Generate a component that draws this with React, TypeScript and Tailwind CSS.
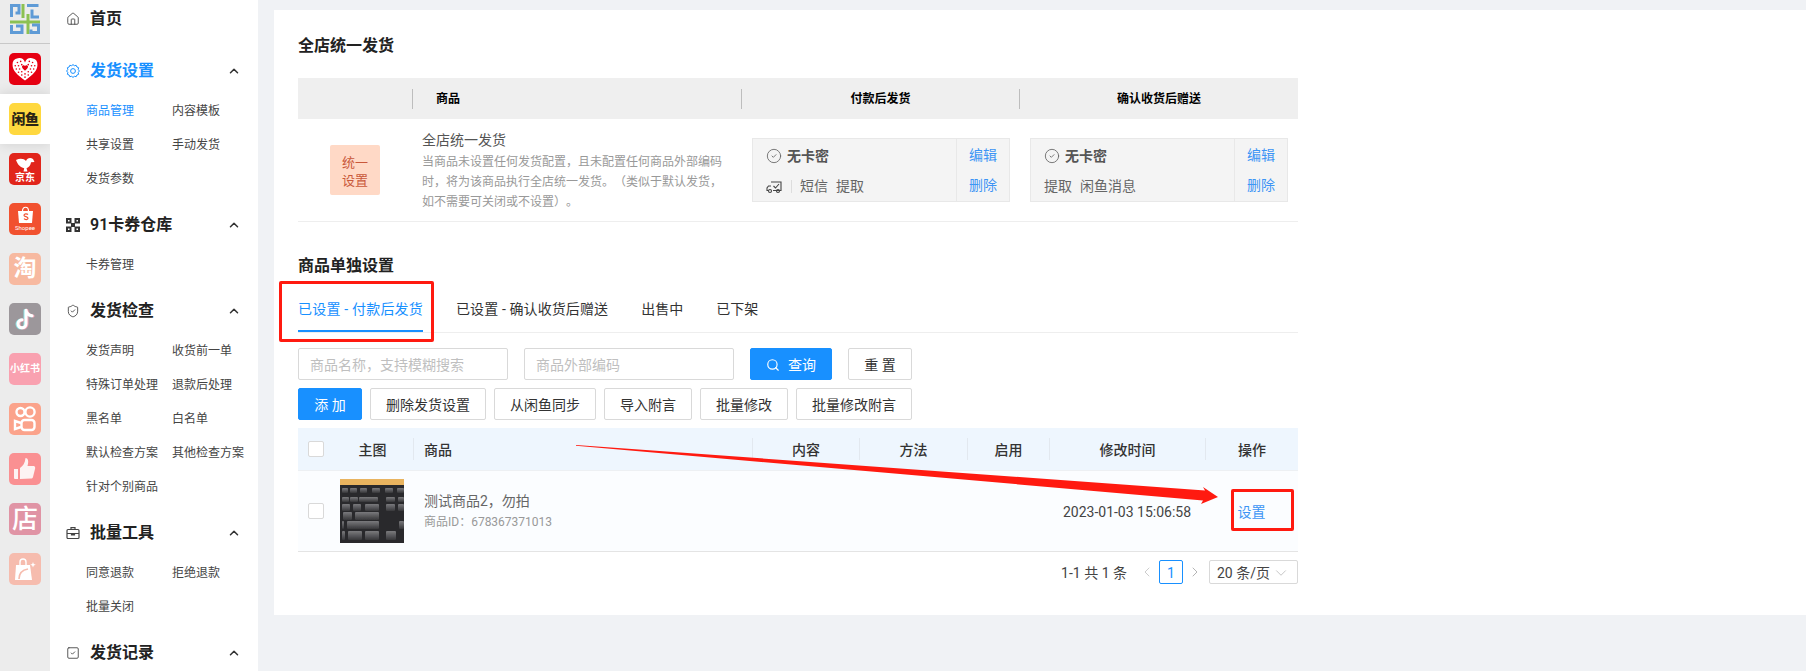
import React from "react";
import { ChevronUp, ChevronLeft, ChevronRight, ChevronDown, Home, Search, ShieldCheck, SquareCheck, CircleCheck } from "lucide-react";

const navGroups = [
  { title: "发货设置", icon: "gear", active: true, items: ["商品管理", "内容模板", "共享设置", "手动发货", "发货参数"] },
  { title: "91卡券仓库", icon: "qr", items: ["卡券管理"] },
  {
    title: "发货检查",
    icon: "shield",
    items: ["发货声明", "收货前一单", "特殊订单处理", "退款后处理", "黑名单", "白名单", "默认检查方案", "其他检查方案", "针对个别商品"],
  },
  { title: "批量工具", icon: "case", items: ["同意退款", "拒绝退款", "批量关闭"] },
  { title: "发货记录", icon: "record", items: [] },
];

const keys = [
  [2, 9, 6, 5], [10, 9, 7, 5], [20, 9, 7, 5], [32, 9, 8, 5], [45, 9, 8, 5], [57, 9, 7, 5],
  [2, 18, 7, 5], [10, 18, 8, 5], [19, 18, 19, 5], [46, 18, 9, 5], [58, 18, 6, 5],
  [2, 25, 8, 7], [13, 25, 8, 7], [25, 25, 14, 7], [46, 25, 9, 7], [58, 25, 6, 7],
  [3, 33, 9, 8], [15, 33, 24, 8],
  [2, 42, 2, 8], [7, 42, 32, 8], [59, 42, 5, 8],
  [2, 52, 3, 9], [8, 52, 14, 9], [25, 52, 14, 9], [46, 52, 10, 9],
];

// red dots of the lace pattern on the heart tile
const heartDots = [
  [5, 5], [8, 4], [16, 4], [19, 5], [3, 8], [6, 8], [9, 7], [15, 7], [18, 8], [21, 8],
  [4, 11], [7, 11], [17, 11], [20, 11], [6, 14], [9, 13.500], [15, 13.500], [18, 14], [9, 16.500], [12, 15.500], [15, 16.500], [12, 18.500],
];

function NavIcon({ name }: { name: string }) {
  if (name === "gear") {
    return (
      <svg width="14" height="14" viewBox="0 0 14 14" fill="none" stroke="#1890ff" strokeWidth="1">
        <path d="M7 .6l1.400 1.100 1.800-.4.700 1.700 1.700.7-.4 1.800L13.400 7l-1.200 1.500.4 1.800-1.700.7-.7 1.700-1.800-.4L7 13.400l-1.400-1.100-1.800.4-.7-1.700-1.700-.7.4-1.800L.6 7l1.200-1.500-.4-1.800 1.700-.7.7-1.700 1.800.4z" />
        <circle cx="7" cy="7" r="2.400" />
      </svg>
    );
  }
  if (name === "qr") {
    return (
      <svg width="14" height="14" viewBox="0 0 14 14" fill="#333">
        <path d="M0 0h5.500v5.500H0zM8.500 0H14v5.500H8.500zM0 8.500h5.500V14H0zM8.500 8.500H14V14H8.500zM5 5h4v4H5z" />
        <path d="M2 2h1.500v1.500H2zM10.500 2H12v1.500h-1.500zM2 10.500h1.500V12H2zM10.500 10.500H12V12h-1.500z" fill="#fff" />
      </svg>
    );
  }
  if (name === "shield") return <ShieldCheck size={14} strokeWidth={1.5} color="#444" />;
  if (name === "case") {
    return (
      <svg width="14" height="14" viewBox="0 0 14 14" fill="none" stroke="#444" strokeWidth="1.200">
        <rect x="1" y="3.500" width="12" height="9" rx="1" />
        <path d="M5 3.500V1.600h4v1.900M1 7.500h12" />
        <path d="M5.500 7.500h3V9h-3z" fill="#444" />
      </svg>
    );
  }
  if (name === "record") return <SquareCheck size={14} strokeWidth={1.5} color="#444" />;
  return <Home size={14} strokeWidth={1.5} color="#444" />;
}

function NavGroup({ group }: { group: (typeof navGroups)[number] }) {
  return (
    <div className="mb-[11px]">
      <div className="flex h-9 items-center pl-4 pr-[16px]">
        <span className="flex w-6 items-center"><NavIcon name={group.icon} /></span>
        <span className={`text-base font-semibold ${group.active ? "text-[#1890ff]" : "text-[#222]"}`}>{group.title}</span>
        <ChevronUp size={14} strokeWidth={2.6} color="#333" className="ml-auto mr-[1px]" />
      </div>
      {group.items.length > 0 && (
        <div className="mt-[5px] grid grid-cols-[86px_86px] pl-9 text-xs leading-[34px] text-[#444]">
          {group.items.map((item) => (
            <a key={item} className={`whitespace-nowrap ${item === "商品管理" ? "text-[#1890ff]" : ""}`}>{item}</a>
          ))}
        </div>
      )}
    </div>
  );
}

function Tile({ bg, children, active }: { bg: string; children: React.ReactNode; active?: boolean }) {
  return (
    <div className={`flex h-[50px] items-center justify-center ${active ? "bg-white shadow-[0_0_12px_rgba(0,0,0,0.12)]" : ""}`}>
      <div className={`flex h-8 w-8 flex-col items-center justify-center overflow-hidden rounded-[5px] text-white ${bg}`}>{children}</div>
    </div>
  );
}

function Rail() {
  return (
    <div className="flex w-[50px] shrink-0 flex-col bg-[#ececec]">
      <div className="flex h-[44px] items-start justify-center border-b border-[#c8c8c8] pt-1">
        <svg width="30" height="30" viewBox="0 0 30 30" fill="none" strokeWidth="3">
          <path d="M13 0v14" stroke="#8cc152" />
          <path d="M0 18h30M18 10v20" stroke="#8cc152" />
          <path d="M1.500 13V1.500H9V9H5.500M29 13H22V5.500M17 1.500h11.500M1.500 21v7.500H12V22H6M22 21h6.500v7.500H21v-3" stroke="#5f9bd6" />
        </svg>
      </div>
      <div className="flex flex-col">
        <Tile bg="bg-[#e60012]">
          <svg width="26" height="24" viewBox="0 0 24 22">
            <path d="M12 21.500C5 16.500.5 12.500.5 7a5.900 5.900 0 0 1 11.500-2 5.900 5.900 0 0 1 11.500 2c0 5.500-4.500 9.500-11.500 14.500z" fill="#fff" />
            <g fill="#e60012">
              {heartDots.map(([x, y]) => <circle key={`${x}-${y}`} cx={x} cy={y} r="0.750" />)}
              <path d="M12 12.500c-1.800-1.200-2.800-2.300-2.800-3.700a1.500 1.500 0 0 1 2.800-.6 1.500 1.500 0 0 1 2.800.6c0 1.400-1 2.500-2.800 3.700z" />
            </g>
          </svg>
        </Tile>
        <Tile bg="bg-[#ffd83f]" active>
          <span className="whitespace-nowrap text-[14px] font-black leading-none tracking-[-0.5px] text-[#2a2416]">闲鱼</span>
        </Tile>
        <Tile bg="bg-[#e1251b]">
          <svg width="20" height="16" viewBox="0 0 20 16" fill="#fff">
            <path d="M1 4c4-2 8-1.500 10 1 1-3 4.500-4 7-2l1.500 3-3.500.2c-.3 3-2 5-4.500 6l1 3.300H8.500l.7-3.300C5.500 11.500 2.500 8.500 1 4z" />
          </svg>
          <span className="text-[10px] font-bold leading-[11px]">京东</span>
        </Tile>
        <Tile bg="bg-[#f1512f]">
          <svg width="17" height="18" viewBox="0 0 17 18">
            <path d="M1 5h15l-1 12H2z" fill="#fff" />
            <path d="M5.500 5c0-5 6-5 6 0" fill="none" stroke="#fff" strokeWidth="1.200" />
            <path d="M11 8.500c-1-1-4-1-4 .8 0 1.800 4 1 4 3 0 1.600-3 1.600-4 .4" fill="none" stroke="#f1512f" strokeWidth="1.200" />
          </svg>
          <span className="text-[6px] leading-[8px]">Shopee</span>
        </Tile>
        <Tile bg="bg-[#f7b9a0]"><span className="text-[23px] font-bold leading-[28px]">淘</span></Tile>
        <Tile bg="bg-[#9c979b]">
          <svg width="22" height="24" viewBox="0 0 22 24" fill="none" strokeLinecap="round">
            <path d="M12 3v13.500a4 4 0 1 1-4-4M12 3c.4 3 2.600 5 6 5.400" stroke="#8fe4e6" strokeWidth="3" transform="translate(-1 .6)" />
            <path d="M12 3v13.500a4 4 0 1 1-4-4M12 3c.4 3 2.600 5 6 5.400" stroke="#f3a3b4" strokeWidth="3" transform="translate(1 .6)" />
            <path d="M12 3v13.500a4 4 0 1 1-4-4M12 3c.4 3 2.600 5 6 5.400" stroke="#fff" strokeWidth="3" transform="translate(0 .3)" />
          </svg>
        </Tile>
        <Tile bg="bg-[#f9a1b0]"><span className="whitespace-nowrap text-[10px] font-bold leading-[14px]">小红书</span></Tile>
        <Tile bg="bg-[#fba38b]">
          <svg width="24" height="26" viewBox="0 0 24 26" fill="none" stroke="#fff" strokeWidth="2.400">
            <circle cx="7.500" cy="6" r="4" />
            <circle cx="17" cy="6" r="4.600" />
            <rect x="8.500" y="14" width="13" height="10" rx="3" />
            <path d="M8 17l-6-2v8l6-2" />
          </svg>
        </Tile>
        <Tile bg="bg-[#fa9092]">
          <svg width="24" height="24" viewBox="0 0 24 24" fill="#fdf3f3">
            <path d="M1 12h4v10H2a1 1 0 0 1-1-1z" />
            <path d="M7 11c3-2 5-5 5.500-10 2.500 0 3.500 3 2 8h6c1.500 0 2 1.500 1.500 3l-2 8c-.3 1-1 1.500-2 1.500L7 22z" />
          </svg>
        </Tile>
        <Tile bg="bg-[#e094a5]"><span className="text-[26px] font-medium leading-[30px]">店</span></Tile>
        <Tile bg="bg-[#f6bcae]">
          <svg width="24" height="24" viewBox="0 0 24 24">
            <path d="M3 8h14l2 15H2z" fill="#fff" />
            <path d="M7 8V5c0-4 6-4 6 0v3" fill="none" stroke="#fff" strokeWidth="1.400" />
            <path d="M6 22c0-6 3-9 9-10" fill="none" stroke="#f6bcae" strokeWidth="1.600" />
            <path d="M20 5l.8 2 2 .8-2 .8-.8 2-.8-2-2-.8 2-.8z" fill="#fff" />
          </svg>
        </Tile>
      </div>
    </div>
  );
}

function Sidebar() {
  return (
    <div className="w-[208px] shrink-0 overflow-hidden bg-white">
      <div className="mb-4 mt-px flex h-9 items-center pl-4">
        <span className="flex w-6 items-center"><NavIcon name="home" /></span>
        <span className="text-base font-semibold text-[#222]">首页</span>
      </div>
      {navGroups.map((g) => <NavGroup key={g.title} group={g} />)}
    </div>
  );
}

function RuleBox({ children }: { children: React.ReactNode }) {
  return (
    <div className="flex h-16 w-[258px] border border-[#e8e8e8] bg-[#f4f4f4]">
      <div className="flex-1 pl-[13px] pt-[7px] text-sm text-[#666]">{children}</div>
      <div className="flex w-[53px] flex-col gap-[10px] border-l border-[#e8e8e8] pt-[6px] text-center text-sm leading-5 text-[#3d95f5]">
        <a>编辑</a>
        <a>删除</a>
      </div>
    </div>
  );
}

function NoCard() {
  return (
    <div className="flex h-5 items-center gap-[5px]">
      <CircleCheck size={16} strokeWidth={1.3} color="#666" />
      <span className="font-semibold text-[#555]">无卡密</span>
    </div>
  );
}

function HeadCell({ children, left }: { children?: React.ReactNode; left?: boolean }) {
  return (
    <div className="flex items-center">
      <div className={`flex h-[22px] w-full items-center border-l border-[#e2e8ef] pt-[2px] ${left ? "pl-[10px]" : "justify-center"}`}>{children}</div>
    </div>
  );
}

function Keyboard() {
  return (
    <svg width="64" height="64" viewBox="0 0 64 64" className="ml-[6px] block">
      <defs>
        <linearGradient id="key" x1="0" y1="0" x2="0" y2="1">
          <stop offset="0" stopColor="#7a7a7d" />
          <stop offset="1" stopColor="#37373a" />
        </linearGradient>
        <filter id="soft"><feGaussianBlur stdDeviation="0.600" /></filter>
      </defs>
      <rect width="64" height="64" fill="#29292c" />
      <rect width="64" height="6" fill="#e9b45f" />
      <g filter="url(#soft)">
        {keys.map(([x, y, w, h], i) => (
          <rect key={i} x={x} y={y} width={w} height={h} rx="1" fill="url(#key)" />
        ))}
      </g>
    </svg>
  );
}

function Button({ children, primary, className = "" }: { children: React.ReactNode; primary?: boolean; className?: string }) {
  return (
    <button className={`flex h-8 items-center justify-center rounded-[2px] border pt-[2px] text-sm ${primary ? "border-[#1890ff] bg-[#1890ff] text-white" : "border-[#d9d9d9] bg-white text-[#333]"} ${className}`}>
      {children}
    </button>
  );
}

function Content() {
  return (
    <div className="h-[605px] bg-white pl-6 pt-[24px]">
      <div className="w-[1000px]">
        <h2 className="text-base font-semibold leading-6 text-[#222]">全店统一发货</h2>

        <div className="mt-5 grid h-[41px] grid-cols-[114px_329px_278px_279px] bg-[#efefef] text-xs font-semibold text-black">
          <div />
          <div className="flex items-center"><div className="flex h-5 w-full items-center border-l border-[#bdbdbd] pl-[23px]">商品</div></div>
          <div className="flex items-center"><div className="flex h-5 w-full items-center justify-center border-l border-[#bdbdbd]">付款后发货</div></div>
          <div className="flex items-center"><div className="flex h-5 w-full items-center justify-center border-l border-[#bdbdbd]">确认收货后赠送</div></div>
        </div>

        <div className="flex h-[103px] items-center border-b border-[#eeeeee]">
          <div className="ml-8 flex h-[50px] w-[50px] items-center justify-center rounded-[2px] bg-[#ffd9c6] pt-[3px] text-center text-[13px] leading-[18px] text-[#c9583a]">统一<br />设置</div>
          <div className="ml-[42px] mt-[11px] w-[305px] self-start">
            <div className="text-sm leading-5 text-[#555]">全店统一发货</div>
            <p className="mt-[2px] text-xs leading-5 text-[#999] [text-spacing-trim:space-all]">当商品未设置任何发货配置，且未配置任何商品外部编码时，将为该商品执行全店统一发货。（类似于默认发货，如不需要可关闭或不设置）。</p>
          </div>
          <div className="ml-[25px] flex gap-5">
            <RuleBox>
              <NoCard />
              <div className="mt-[10px] flex h-5 items-center">
                <svg width="16" height="16" viewBox="0 0 16 16" fill="none" stroke="#444" strokeWidth="1.100">
                  <path d="M5 4h10v8.500H7M5 8H2.500L1 10v2.500h1.500" />
                  <circle cx="4" cy="13" r="1.500" />
                  <circle cx="12" cy="13" r="1.500" />
                  <path d="M7.500 8l2 2 3.500-4" />
                </svg>
                <span className="ml-[9px] mr-[8px] h-[13px] w-px bg-[#dddddd]" />
                <span>短信</span>
                <span className="ml-2">提取</span>
              </div>
            </RuleBox>
            <RuleBox>
              <NoCard />
              <div className="mt-[10px] flex h-5 items-center">
                <span>提取</span>
                <span className="ml-2">闲鱼消息</span>
              </div>
            </RuleBox>
          </div>
        </div>

        <h2 className="mt-8 text-base font-semibold leading-6 text-[#222]">商品单独设置</h2>

        <div className="flex h-[55px] gap-[33px] border-b border-[#eeeeee] text-sm leading-[22px] text-[#333]">
          <a className="h-[54px] whitespace-nowrap border-b-2 border-[#1890ff] pt-5 tracking-[0.2px] text-[#1890ff]">已设置 - 付款后发货</a>
          <a className="whitespace-nowrap pt-5 tracking-[0.1px]">已设置 - 确认收货后赠送</a>
          <a className="whitespace-nowrap pt-5">出售中</a>
          <a className="whitespace-nowrap pt-5">已下架</a>
        </div>

        <div className="mt-[15px] flex h-8 gap-4">
          <input placeholder="商品名称，支持模糊搜索" className="w-[210px] rounded-[2px] border border-[#d9d9d9] px-[11px] pt-[2px] text-sm placeholder:text-[#bfbfbf]" />
          <input placeholder="商品外部编码" className="w-[210px] rounded-[2px] border border-[#d9d9d9] px-[11px] pt-[2px] text-sm placeholder:text-[#bfbfbf]" />
          <Button primary className="w-[82px] gap-2"><Search size={14} strokeWidth={2} />查询</Button>
          <Button className="w-16">重 置</Button>
        </div>

        <div className="mt-2 flex gap-2">
          <Button primary className="w-16">添 加</Button>
          <Button className="w-[116px]">删除发货设置</Button>
          <Button className="w-[102px]">从闲鱼同步</Button>
          <Button className="w-[88px]">导入附言</Button>
          <Button className="w-[88px]">批量修改</Button>
          <Button className="w-[116px]">批量修改附言</Button>
        </div>

        <div className="mt-2 grid h-[43px] grid-cols-[36px_79px_339px_107px_108px_82px_156px_93px] border-b border-[#edf0f3] bg-[#eef6fe] text-sm font-medium text-[#333]">
          <div className="flex items-center pl-[10px]"><span className="h-4 w-4 rounded-[2px] border border-[#d9d9d9] bg-white" /></div>
          <div className="flex items-center justify-center pr-[2px] pt-[2px]">主图</div>
          <HeadCell left>商品</HeadCell>
          <HeadCell>内容</HeadCell>
          <HeadCell>方法</HeadCell>
          <HeadCell>启用</HeadCell>
          <HeadCell>修改时间</HeadCell>
          <HeadCell>操作</HeadCell>
        </div>

        <div className="grid h-[81px] grid-cols-[36px_79px_339px_107px_108px_82px_156px_93px] border-b border-[#e4e4e4] bg-[#fbfdff] text-sm text-[#555]">
          <div className="flex items-center pl-[10px]"><span className="h-4 w-4 rounded-[2px] border border-[#d9d9d9] bg-white" /></div>
          <div className="flex items-center"><Keyboard /></div>
          <div className="pl-[11px] pt-[19px]">
            <div className="leading-[22px] text-[#666]">测试商品2，勿拍</div>
            <div className="text-xs leading-5 text-[#999]">商品ID：678367371013</div>
          </div>
          <div />
          <div />
          <div />
          <div className="flex items-center justify-center whitespace-nowrap pt-[2px] text-[#444]">2023-01-03 15:06:58</div>
          <div className="flex items-center justify-center pt-[2px] text-[#3d95f5]"><a>设置</a></div>
        </div>

        <div className="mt-2 flex h-6 items-center justify-end text-sm text-[#444]">
          <span className="mt-[2px]">1-1 共 1 条</span>
          <ChevronLeft size={16} strokeWidth={1.1} color="#bbb" className="ml-3" />
          <span className="ml-1 flex h-6 w-6 items-center justify-center rounded-[2px] border border-[#1890ff] pt-[2px] text-[#1890ff]">1</span>
          <ChevronRight size={16} strokeWidth={1.1} color="#999" className="ml-1" />
          <span className="ml-[6px] flex h-6 w-[89px] items-center rounded-[2px] border border-[#d9d9d9] pl-[7px] pt-[2px]">
            20 条/页
            <ChevronDown size={18} strokeWidth={0.9} color="#aaa" className="ml-[2px]" />
          </span>
        </div>
      </div>
    </div>
  );
}

export default function App() {
  return (
    <div className="relative flex h-[671px] w-[1806px] overflow-hidden bg-[#f0f2f5] font-['Roboto','Noto_Sans_CJK_SC',sans-serif]">
      <Rail />
      <Sidebar />
      <main className="flex-1 pl-4 pt-[10px]">
        <Content />
      </main>

      {/* red annotations drawn on top of the screenshot */}
      <div className="absolute left-[279px] top-[281px] h-[61px] w-[155px] rounded-[2px] border-[3px] border-[#ff1a10]" />
      <div className="absolute left-[1231px] top-[489px] h-[42px] w-[63px] rounded-[2px] border-[3px] border-[#ff1a10]" />
      <svg className="pointer-events-none absolute left-0 top-0" width="1806" height="671">
        <polygon points="576,445 1205,490.500 1203,487 1218,497 1201,504 1203,500.500 576,445.800" fill="#ff1a10" />
      </svg>
    </div>
  );
}
